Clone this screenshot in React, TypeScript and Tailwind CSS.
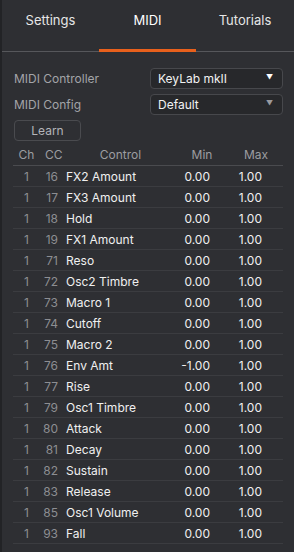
import React from "react";

const rows: [string, string, string, string][] = [
  ["16", "FX2 Amount", "0.00", "1.00"],
  ["17", "FX3 Amount", "0.00", "1.00"],
  ["18", "Hold", "0.00", "1.00"],
  ["19", "FX1 Amount", "0.00", "1.00"],
  ["71", "Reso", "0.00", "1.00"],
  ["72", "Osc2 Timbre", "0.00", "1.00"],
  ["73", "Macro 1", "0.00", "1.00"],
  ["74", "Cutoff", "0.00", "1.00"],
  ["75", "Macro 2", "0.00", "1.00"],
  ["76", "Env Amt", "-1.00", "1.00"],
  ["77", "Rise", "0.00", "1.00"],
  ["79", "Osc1 Timbre", "0.00", "1.00"],
  ["80", "Attack", "0.00", "1.00"],
  ["81", "Decay", "0.00", "1.00"],
  ["82", "Sustain", "0.00", "1.00"],
  ["83", "Release", "0.00", "1.00"],
  ["85", "Osc1 Volume", "0.00", "1.00"],
  ["93", "Fall", "0.00", "1.00"],
];

function Select({ value, dim }: { value: string; dim?: boolean }) {
  return (
    <div className="w-[133px] h-[21px] rounded-[4px] border border-[#47484c] bg-[#27282b] flex items-center pl-[7px] pr-[9px] text-[12px] text-[#f2f2f2]">
      <span className="flex-1">{value}</span>
      <span className={"text-[7px] " + (dim ? "text-[#9a9a9e]" : "text-white")}>▼</span>
    </div>
  );
}

export default function App() {
  return (
    <div className="w-[294px] h-[552px] bg-[#2e2f33] flex font-[Inter,'Liberation_Sans',sans-serif] overflow-hidden">
      <div className="w-[2px] bg-[#222326]" />
      <div className="flex-1 flex flex-col">
        <div className="h-[52px] border-b border-[#56575b] flex text-[13px] text-[#e6e6e6]">
          <div className="w-[97px] pt-[11px] text-center leading-[18px]">Settings</div>
          <div className="w-[97px] pt-[11px] text-center leading-[18px] text-white relative">
            MIDI
            <div className="absolute left-0 right-0 bottom-[-1px] h-[3px] bg-[#e8601c]" />
          </div>
          <div className="flex-1 pt-[11px] text-center leading-[18px]">Tutorials</div>
        </div>
        <div className="pl-[12px] pr-[11px] pt-[16px] flex flex-col">
          <div className="flex items-center justify-between">
            <span className="text-[12px] text-[#a3a4a8]">MIDI Controller</span>
            <Select value="KeyLab mkII" />
          </div>
          <div className="flex items-center justify-between mt-[5px]">
            <span className="text-[12px] text-[#a3a4a8]">MIDI Config</span>
            <Select value="Default" dim />
          </div>
          <div className="mt-[5px] w-[67px] h-[21px] rounded-[4px] border border-[#4a4b4f] flex items-center justify-center text-[12px] text-[#b4b5b9]">
            Learn
          </div>
          <div className="flex flex-col">
            <div className="h-[25px] pt-[3px] flex items-center text-[12px] text-[#9c9da1] border-b border-[#4a4b4f] -ml-[1px]">
              <span className="w-[27px] text-center">Ch</span>
              <span className="w-[26px] pl-[5px]">CC</span>
              <span className="w-[109px] text-center">Control</span>
              <span className="w-[54px] text-center">Min</span>
              <span className="w-[54px] text-center">Max</span>
            </div>
            {rows.map(([cc, name, min, max]) => (
              <div
                key={cc}
                className="h-[21px] flex items-center text-[12px] border-b border-[#3b3c40] -ml-[1px] pt-[2px]"
              >
                <span className="w-[27px] text-center text-[#8d8e92]">1</span>
                <span className="w-[18px] text-right text-[#8d8e92]">{cc}</span>
                <span className="w-[118px] pl-[8px] text-[#f0f0f0]">{name}</span>
                <span className="w-[34px] text-right text-[#f0f0f0]">{min}</span>
                <span className="w-[52px] text-right text-[#f0f0f0]">{max}</span>
              </div>
            ))}
          </div>
        </div>
      </div>
    </div>
  );
}
